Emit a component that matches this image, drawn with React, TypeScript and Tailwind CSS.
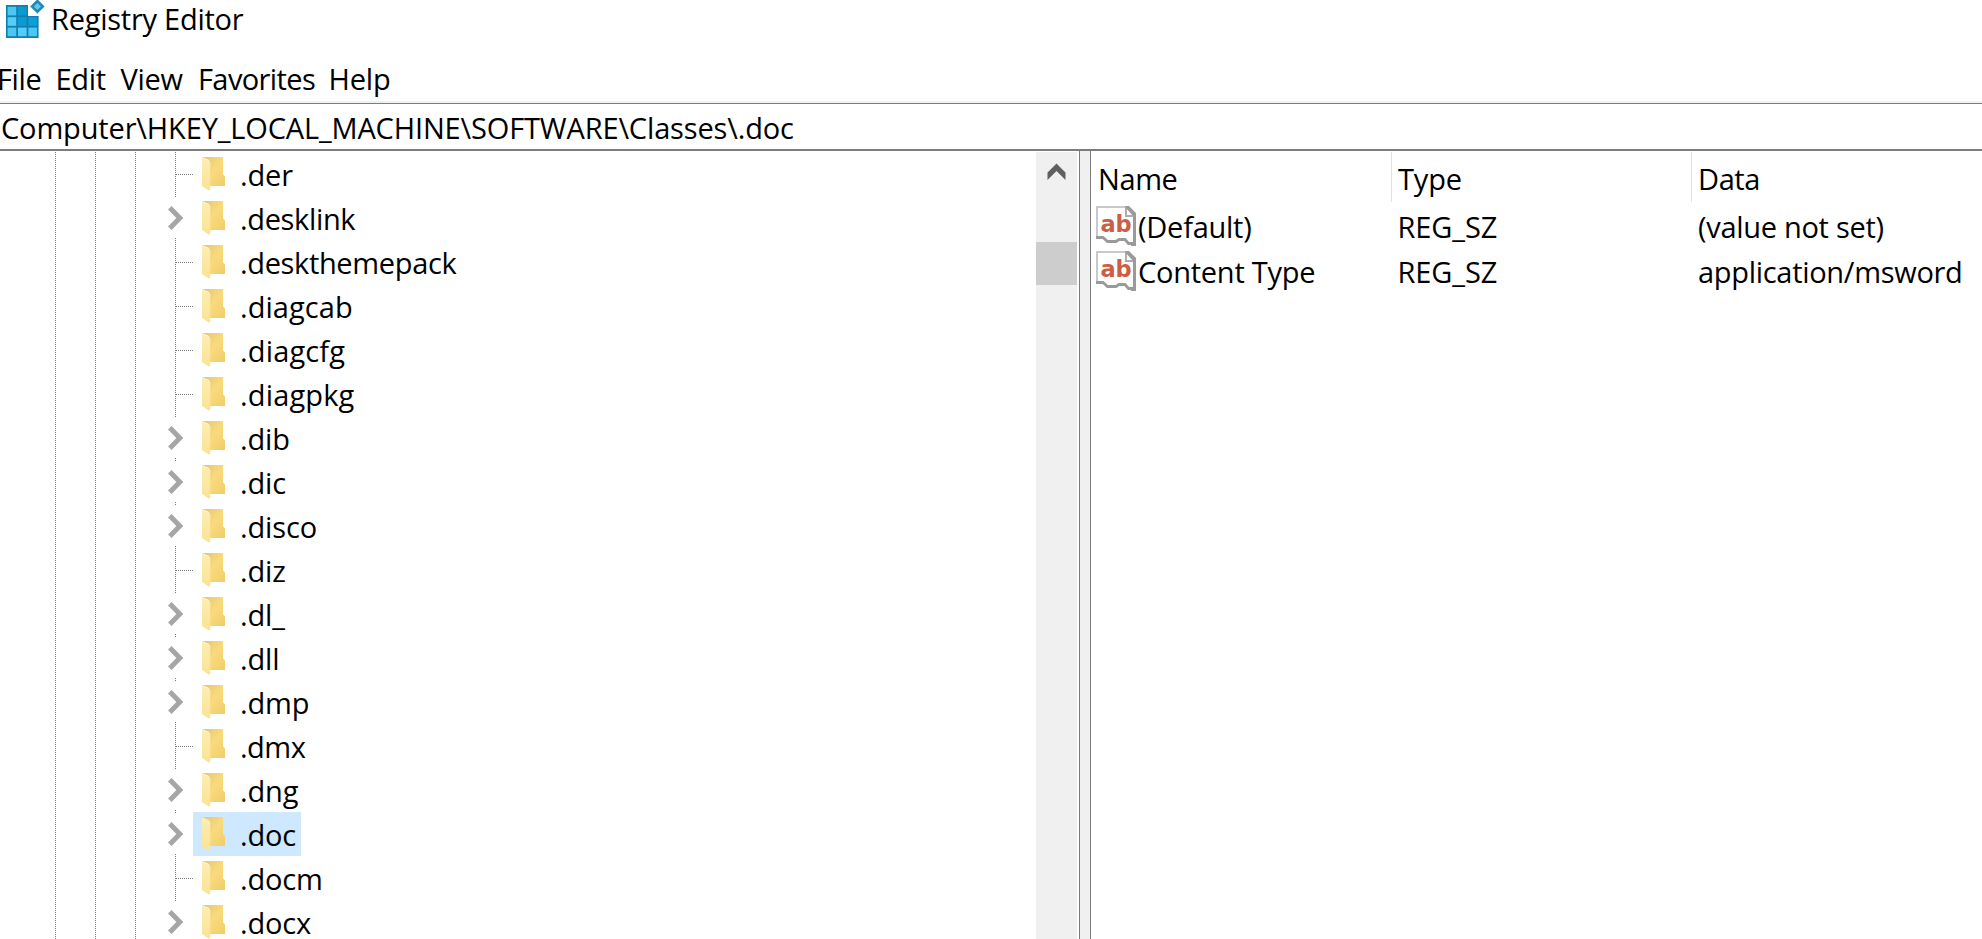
const treeItems: { name: string; expandable?: boolean; selected?: boolean; tracking?: string }[] = [
  { name: ".der" },
  { name: ".desklink", expandable: true, tracking: "tracking-[-0.35px]" },
  { name: ".deskthemepack", tracking: "tracking-[-0.35px]" },
  { name: ".diagcab", tracking: "tracking-[0.05px]" },
  { name: ".diagcfg", tracking: "tracking-[0.15px]" },
  { name: ".diagpkg", tracking: "tracking-[0.15px]" },
  { name: ".dib", expandable: true },
  { name: ".dic", expandable: true },
  { name: ".disco", expandable: true },
  { name: ".diz" },
  { name: ".dl_", expandable: true },
  { name: ".dll", expandable: true },
  { name: ".dmp", expandable: true },
  { name: ".dmx", tracking: "tracking-[-0.5px]" },
  { name: ".dng", expandable: true },
  { name: ".doc", expandable: true, selected: true },
  { name: ".docm" },
  { name: ".docx", expandable: true },
];

const values = [
  { name: "(Default)", type: "REG_SZ", data: "(value not set)" },
  { name: "Content Type", type: "REG_SZ", data: "application/msword" },
];

function RegistryIcon() {
  const cells = [
    [0, 0, "#4cc6f4"], [1, 0, "#0a9bd3"],
    [0, 1, "#55cdf9"], [1, 1, "#0a9bd3"], [2, 1, "#0c9fd8"],
    [0, 2, "#4cc6f4"], [1, 2, "#55cdf9"], [2, 2, "#4cc6f4"],
  ] as const;
  return (
    <svg width="46" height="40" viewBox="0 0 46 40" className="shrink-0">
      <path d="M6 5H28V16H38.6V38H6Z" fill="#137fae" />
      {cells.map(([c, r, fill]) => (
        <rect key={`${c}-${r}`} x={7.6 + c * 10.4} y={6.8 + r * 10.4} width="8.6" height="8.6" fill={fill} />
      ))}
      <path d="M37.4 -0.8L44.6 6.4L37.4 13.6L30.2 6.4Z" fill="#2187b4" />
      <path d="M37.4 3L41 6.5L37.4 10L33.8 6.5Z" fill="#62c8ee" />
    </svg>
  );
}

function FolderIcon() {
  return (
    <svg width="24" height="36" viewBox="0 0 24 36" className="shrink-0">
      <defs>
        <linearGradient id="folderBack" x1="0" y1="0" x2="1" y2="1">
          <stop offset="0" stopColor="#e3c56f" />
          <stop offset="0.5" stopColor="#f9da7d" />
          <stop offset="1" stopColor="#f0cd68" />
        </linearGradient>
        <linearGradient id="folderFront" x1="0" y1="0" x2="0" y2="1">
          <stop offset="0" stopColor="#fdeeb4" />
          <stop offset="1" stopColor="#fbe294" />
        </linearGradient>
      </defs>
      <path d="M0 1H21V18.5L23 20.5V30H7V4Z" fill="url(#folderBack)" />
      <path d="M0 1L8.3 5.5V33.5L7 34.8L0 30Z" fill="url(#folderFront)" />
    </svg>
  );
}

function ValueIcon() {
  return (
    <svg width="40" height="40" viewBox="0 0 40 40" className="shrink-0">
      <path d="M1 1H29L38 10V37L33 36L31 33H26L23 36H13L9 32H1Z" fill="#fff" />
      <path d="M1 31V1H30" fill="none" stroke="#c9c9c9" strokeWidth="2" />
      <path d="M30 1V10H38" fill="none" stroke="#adadad" strokeWidth="2" />
      <path d="M29 0H33L40 7V40H35V38H37V10L30 2Z" fill="#9a9a9a" />
      <path d="M0 31.5H7L11.5 35.5H20L23 33.5H29L32.5 37.5H38" fill="none" stroke="#9a9a9a" strokeWidth="2.8" />
      <text x="4.5" y="26" fontSize="23" fontWeight="700" fill="#cb5f45" textLength="31" lengthAdjust="spacingAndGlyphs" fontFamily="DejaVu Sans, sans-serif">
        ab
      </text>
    </svg>
  );
}

const verticalDots = "bg-[repeating-linear-gradient(to_bottom,#777_0_1px,transparent_1px_2px)]";
const horizontalDots = "bg-[repeating-linear-gradient(to_right,#777_0_1px,transparent_1px_2px)]";

function TreeRow({ name, expandable, selected, tracking = "" }: (typeof treeItems)[number]) {
  return (
    <div className="flex h-11 shrink-0">
      <div className="w-[55px]" />
      <div className={`mr-[39px] w-px ${verticalDots}`} />
      <div className={`mr-[39px] w-px ${verticalDots}`} />
      <div className={`w-px ${verticalDots}`} />
      <div className="flex w-[57px] items-center">
        {expandable ? (
          <div className="flex h-11 w-[57px] flex-col pl-[31px]">
            <div className="ml-2 h-px w-px bg-[#777]" />
            <svg width="18" height="26" viewBox="0 0 18 26" className="mt-2 mb-[7px] shrink-0">
              <path d="M2.8 2.8L12.8 13L2.8 23.2" fill="none" stroke="#a6a6a6" strokeWidth="5" />
            </svg>
            <div className="ml-2 h-px w-px bg-[#777]" />
          </div>
        ) : (
          <>
            <div className={`ml-[39px] h-11 w-px ${verticalDots}`} />
            <div className={`-mr-0.5 h-px w-[18px] ${horizontalDots}`} />
          </>
        )}
      </div>
      <div className={`flex items-center ${selected ? "bg-[#cde8ff]" : ""}`}>
        <div className="w-[9px]" />
        <FolderIcon />
        <span className={`pt-0.5 pr-[5px] pl-3.5 ${tracking}`}>{name}</span>
      </div>
    </div>
  );
}

export default function App() {
  return (
    <div className="flex h-[939px] w-[1982px] flex-col overflow-hidden bg-white font-['Open_Sans',sans-serif] text-[29px] leading-[38px] tracking-[-0.15px] whitespace-nowrap text-black">
      <header className="flex h-[57px] shrink-0 items-start">
        <RegistryIcon />
        <h1 className="pl-[5px] tracking-[-0.25px]">Registry Editor</h1>
      </header>
      <nav className="-ml-[3px] flex h-11 shrink-0 items-center">
        <span className="w-[58.5px] tracking-[-0.4px]">File</span>
        <span className="w-[65px] tracking-[-0.3px]">Edit</span>
        <span className="w-[77.5px] tracking-[-0.3px]">View</span>
        <span className="w-[130.5px] tracking-[-0.6px]">Favorites</span>
        <span>Help</span>
      </nav>
      <div className="h-0.5 shrink-0 bg-[#f0f0f0]" />
      <div className="flex h-[48px] shrink-0 items-center border-t border-b-2 border-[#7d7b7d] pt-[3px] pl-px">
        <span className="tracking-[-0.15px]">Computer\HKEY_LOCAL_MACHINE\SOFTWARE\Classes\.doc</span>
      </div>
      <main className="flex min-h-0 flex-1">
        <section className="flex w-[1036px] shrink-0 flex-col overflow-hidden pt-px">
          {treeItems.map((item) => (
            <TreeRow key={item.name} {...item} />
          ))}
        </section>
        <div className="mt-px mr-0.5 flex w-[41px] shrink-0 flex-col items-center bg-[#f0f0f0]">
          <div className="flex h-[90px] pt-[11px]">
            <svg width="19" height="18" viewBox="0 0 19 18">
              <path d="M9.5 0.5L18.5 9.5V17L9.5 8L0.5 17V9.5Z" fill="#606060" />
            </svg>
          </div>
          <div className="h-[43px] w-full bg-[#cdcdcd]" />
        </div>
        <div className="w-3 shrink-0 border-x border-[#7d7b7d] bg-[#f0f0f0]" />
        <section className="flex flex-1 flex-col pt-px">
          <div className="flex h-[51px] items-start">
            <div className="flex h-[50px] w-[301px] items-center border-r border-[#e2e2e2] pt-1 pl-[7px] tracking-[-0.4px]">Name</div>
            <div className="flex h-[50px] w-[300px] items-center border-r border-[#e2e2e2] pt-1 pl-[6px]">Type</div>
            <div className="flex h-[50px] items-center pt-1 pl-[6px] tracking-[-0.4px]">Data</div>
          </div>
          {values.map((v) => (
            <div key={v.name} className="flex h-[45px] items-center">
              <div className="flex w-[306.5px] items-center pl-[5px]">
                <ValueIcon />
                <span className="pt-[3px] pl-[2px] tracking-[-0.25px]">{v.name}</span>
              </div>
              <span className="w-[300.5px] pt-[3px] tracking-[-0.1px]">{v.type}</span>
              <span className="pt-[3px] tracking-[-0.3px]">{v.data}</span>
            </div>
          ))}
        </section>
      </main>
    </div>
  );
}
